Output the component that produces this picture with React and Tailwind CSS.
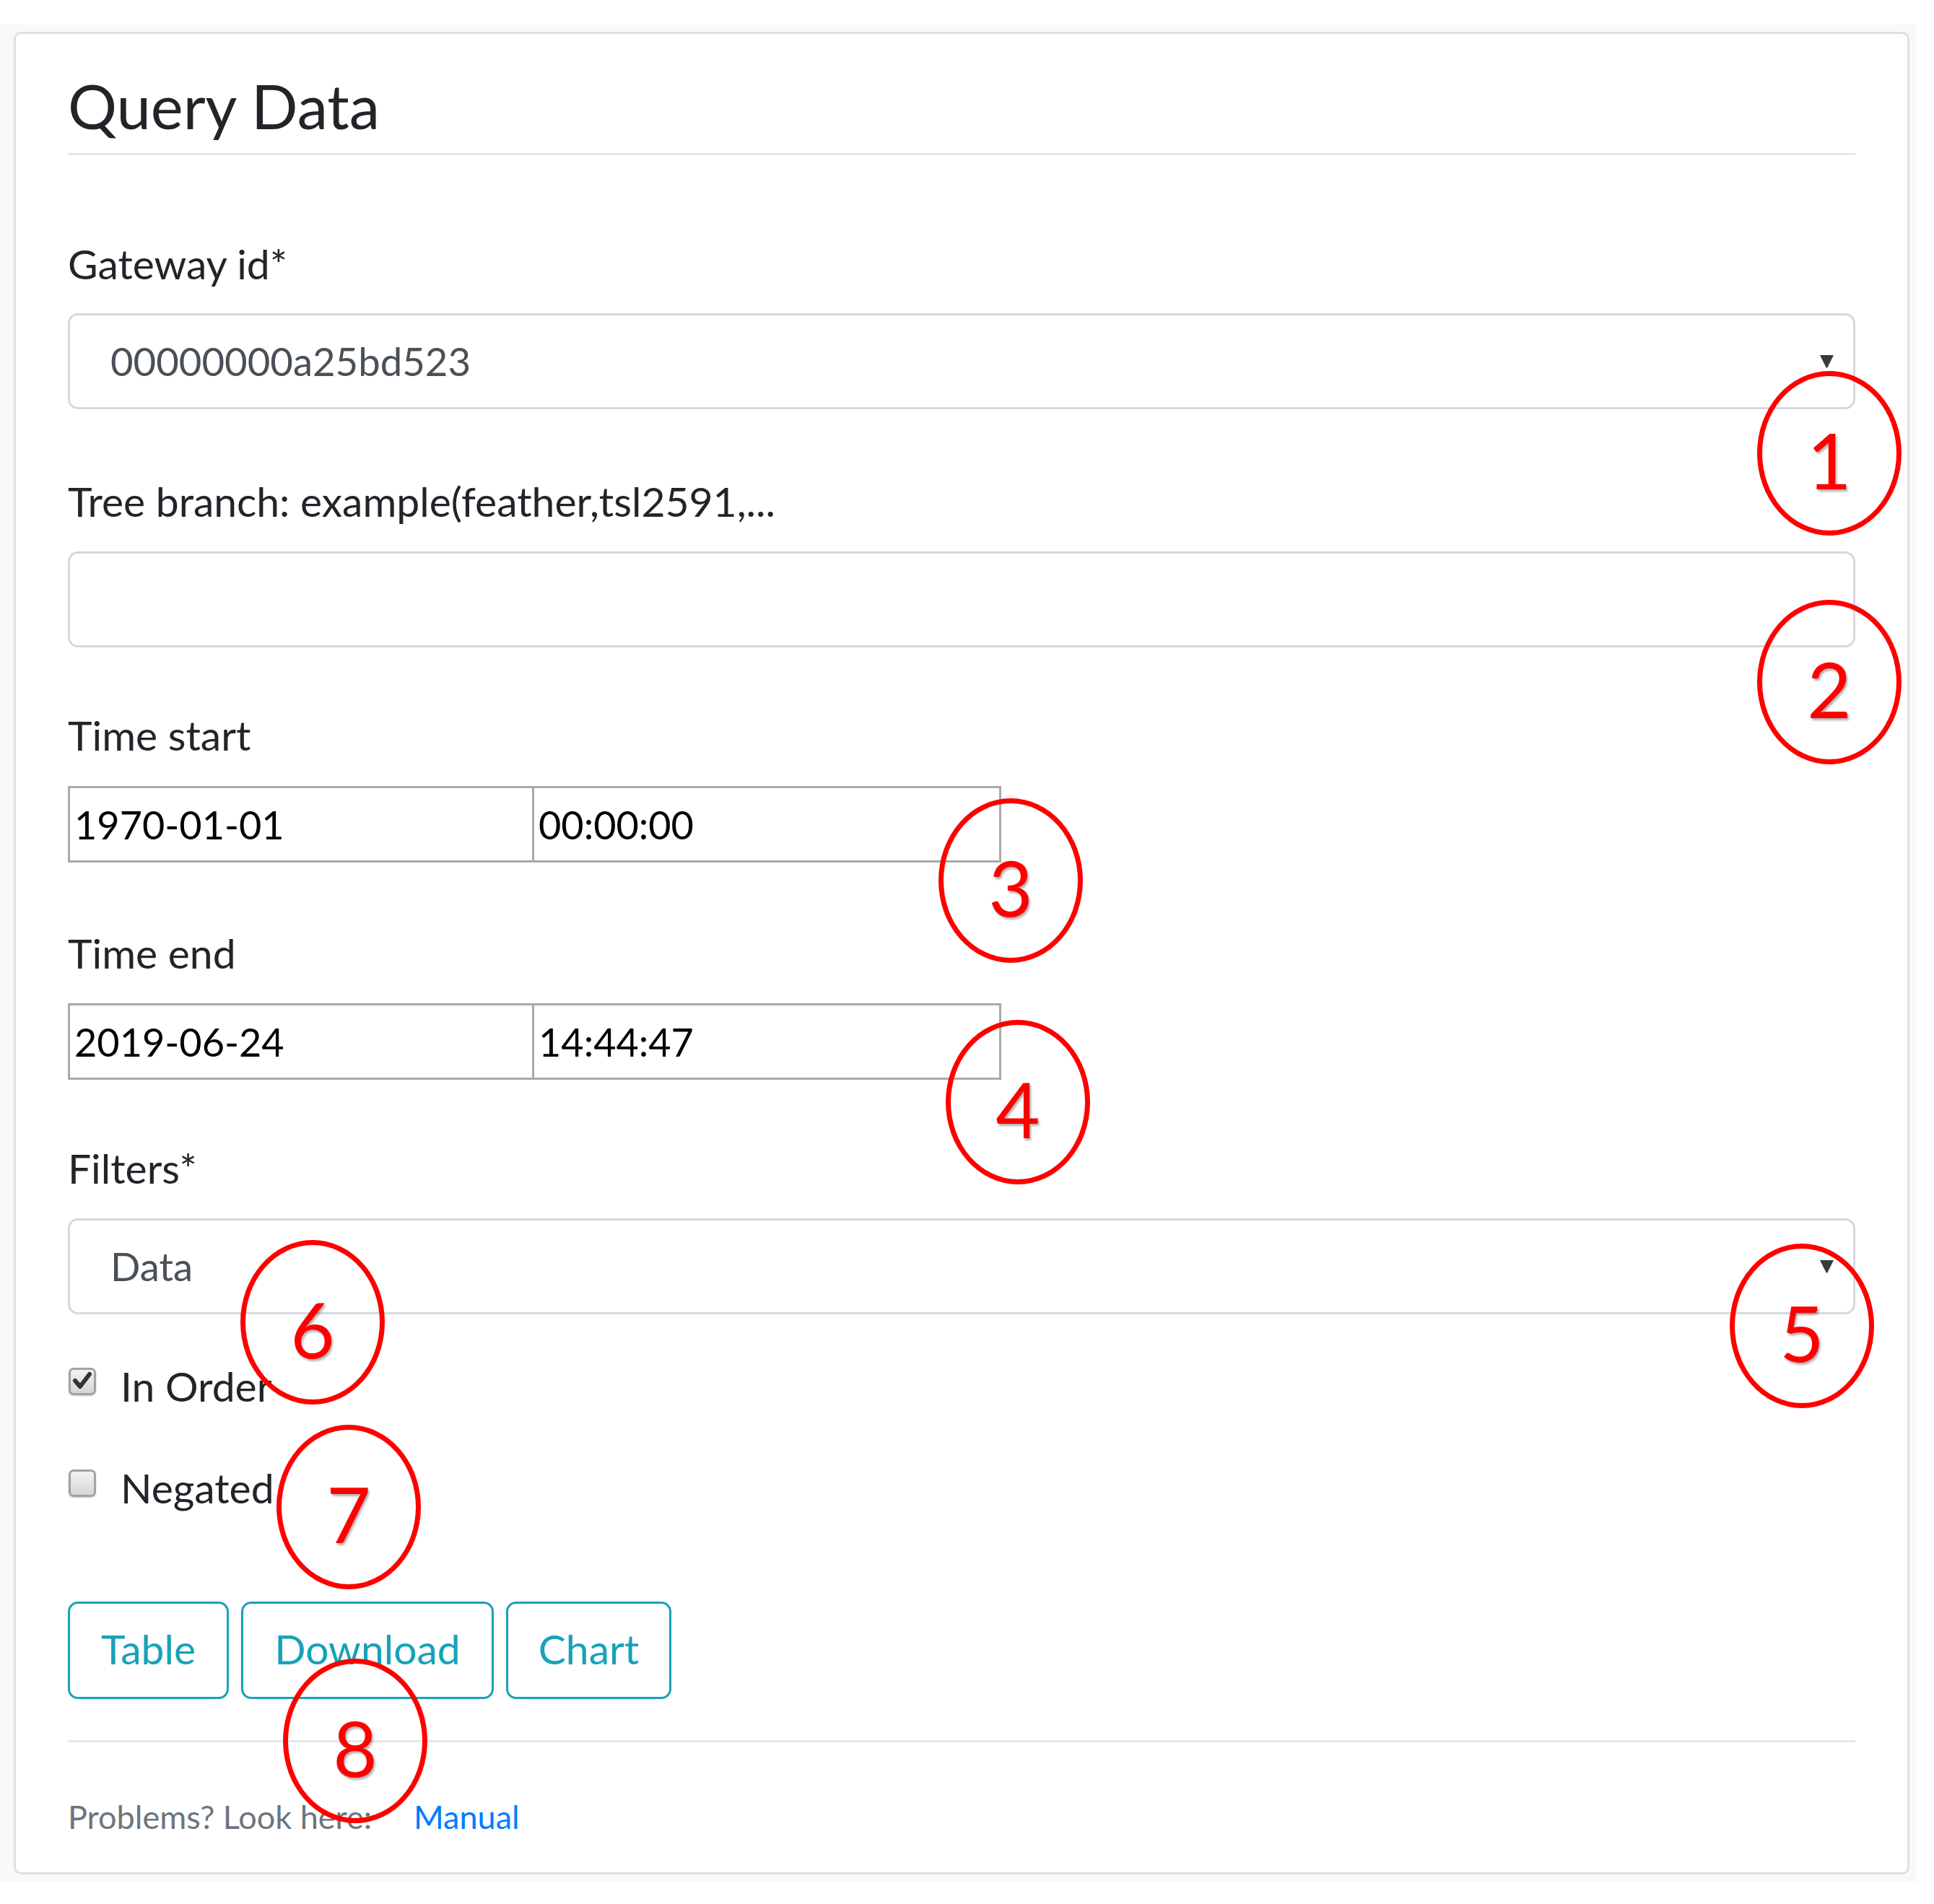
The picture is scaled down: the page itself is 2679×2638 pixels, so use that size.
import React from "react";

const Arrow = () => (
  <svg width="21" height="19" viewBox="0 0 21 19" className="ml-auto shrink-0">
    <path d="M1 1 H20 L11.5 18 Q10.5 19.5 9.5 18 Z" fill="#343a40" />
  </svg>
);

const Check = ({ checked }) => (
  <div className="mt-[17px] h-[38px] w-[38px] shrink-0 rounded-[7px] border-[3px] border-[#a3a3a3] bg-gradient-to-b from-[#f2f2f2] to-[#d6d6d6] shadow-[0_1px_2px_rgba(0,0,0,0.25)]">
    {checked && (
      <svg width="32" height="32" viewBox="0 0 32 32">
        <path d="M6 15 L13 23 L26 6" fill="none" stroke="#333" strokeWidth="6" strokeLinecap="round" strokeLinejoin="round" />
      </svg>
    )}
  </div>
);

const QueryCard = () => {
  return (
    <div className="h-[2553px] rounded-[10px] border-[3px] border-[#dfdfdf] bg-white px-[72px] text-[#212529]">
      <h4 className="mt-[49px] h-[100px] text-[85px] leading-[100px] font-normal">Query Data</h4>
      <div className="mt-[16px] h-[3px] bg-[#e5e7ea]" />

      <div className="mt-[108px] h-[84px] text-[57px] leading-[84px]">Gateway id*</div>
      <div className="mt-[27px] flex h-[133px] items-center rounded-[14px] border-[3px] border-[#d5d9de] pl-[56px] pr-[26px] text-[54.5px] text-[#495057]">
        <span>00000000a25bd523</span>
        <Arrow />
      </div>

      <div className="mt-[85px] h-[84px] text-[57px] leading-[84px]">Tree branch: example(feather,tsl2591,...</div>
      <div className="mt-[28px] h-[133px] rounded-[14px] border-[3px] border-[#d5d9de]" />

      <div className="mt-[79px] h-[84px] text-[57px] leading-[84px]">Time start</div>
      <div className="mt-[29px] flex">
        <div className="flex h-[106px] w-[646px] items-center border-[3px] border-[#a9a9a9] pl-[6px] text-[54px] text-black">1970-01-01</div>
        <div className="-ml-[3px] flex h-[106px] w-[650px] items-center border-[3px] border-[#a9a9a9] pl-[6px] text-[54px] text-black">00:00:00</div>
      </div>

      <div className="mt-[83px] h-[84px] text-[57px] leading-[84px]">Time end</div>
      <div className="mt-[28px] flex">
        <div className="flex h-[106px] w-[646px] items-center border-[3px] border-[#a9a9a9] pl-[6px] text-[54px] text-black">2019-06-24</div>
        <div className="-ml-[3px] flex h-[106px] w-[650px] items-center border-[3px] border-[#a9a9a9] pl-[6px] text-[54px] text-black">14:44:47</div>
      </div>

      <div className="mt-[80px] h-[84px] text-[57px] leading-[84px]">Filters*</div>
      <div className="mt-[28px] flex h-[133px] items-center rounded-[14px] border-[3px] border-[#d5d9de] pl-[56px] pr-[26px] text-[54.5px] text-[#495057]">
        <span>Data</span>
        <Arrow />
      </div>

      <div className="mt-[57px] flex h-[84px] items-start pl-[1px]">
        <Check checked />
        <span className="ml-[34px] text-[57px] leading-[84px]">In Order</span>
      </div>
      <div className="mt-[57px] flex h-[84px] items-start pl-[1px]">
        <Check />
        <span className="ml-[34px] text-[57px] leading-[84px]">Negated</span>
      </div>

      <div className="mt-[116px] flex gap-[17px]">
        <button className="flex h-[135px] w-[223px] items-center justify-center rounded-[14px] border-[3px] border-[#17a2b8] pb-[4px] text-[57px] text-[#17a2b8]">Table</button>
        <button className="flex h-[135px] w-[350px] items-center justify-center rounded-[14px] border-[3px] border-[#17a2b8] pb-[4px] text-[57px] text-[#17a2b8]">Download</button>
        <button className="flex h-[135px] w-[229px] items-center justify-center rounded-[14px] border-[3px] border-[#17a2b8] pb-[4px] text-[57px] text-[#17a2b8]">Chart</button>
      </div>

      <div className="mt-[57px] h-[3px] bg-[#e5e7ea]" />
      <div className="mt-[69px] h-[68px] text-[45px] leading-[68px] text-[#6c757d]">
        <span className="inline-block w-[479px]">Problems? Look here:</span>
        <a className="text-[#007bff]">Manual</a>
      </div>
    </div>
  );
};

const Marker = ({ pos, n }) => (
  <div className={"absolute flex h-[228px] w-[200px] items-center justify-center rounded-[50%] border-[7px] border-[#ff0000] pt-[18px] font-['Lato',sans-serif] text-[106px] leading-none text-[#ff0000] [text-shadow:2px_3px_3px_rgba(0,0,0,0.3)] " + pos}>
    {n}
  </div>
);

export default function App() {
  return (
    <div className="relative min-h-[2638px] w-full bg-white pt-[33px] font-['Lato',sans-serif]">
      <div className="w-[2655px] bg-[#f8f9fa] pb-[10px] pl-[19px] pr-[10px] pt-[11px]">
        <QueryCard />
      </div>

      <Marker pos="left-[2434px] top-[514px]" n="1" />
      <Marker pos="left-[2434px] top-[831px]" n="2" />
      <Marker pos="left-[1300px] top-[1106px]" n="3" />
      <Marker pos="left-[1310px] top-[1413px]" n="4" />
      <Marker pos="left-[2396px] top-[1723px]" n="5" />
      <Marker pos="left-[333px] top-[1718px]" n="6" />
      <Marker pos="left-[383px] top-[1974px]" n="7" />
      <Marker pos="left-[392px] top-[2298px]" n="8" />
    </div>
  );
}
